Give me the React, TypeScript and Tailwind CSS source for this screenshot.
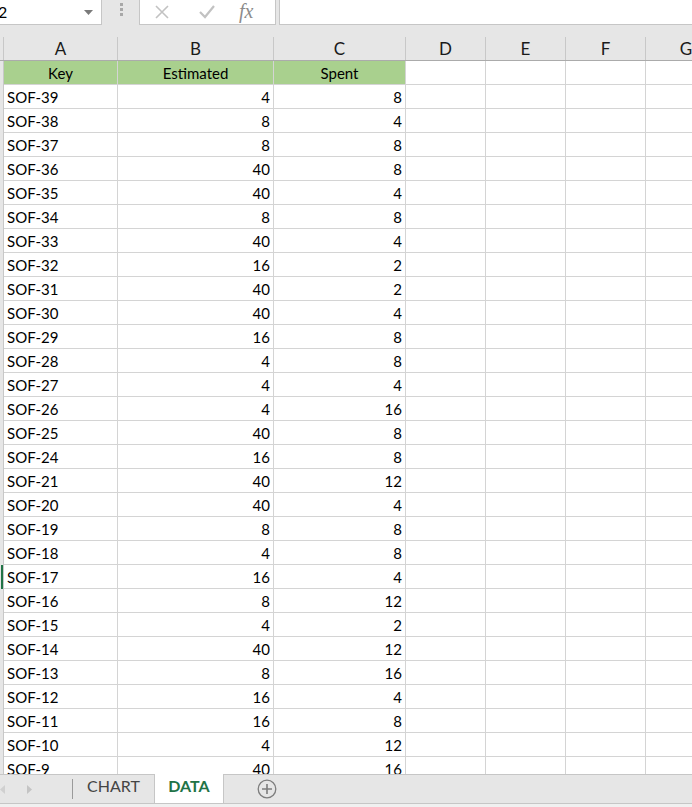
import React from 'react';

const rows: [string, number, number][] = [
  ['SOF-39', 4, 8],
  ['SOF-38', 8, 4],
  ['SOF-37', 8, 8],
  ['SOF-36', 40, 8],
  ['SOF-35', 40, 4],
  ['SOF-34', 8, 8],
  ['SOF-33', 40, 4],
  ['SOF-32', 16, 2],
  ['SOF-31', 40, 2],
  ['SOF-30', 40, 4],
  ['SOF-29', 16, 8],
  ['SOF-28', 4, 8],
  ['SOF-27', 4, 4],
  ['SOF-26', 4, 16],
  ['SOF-25', 40, 8],
  ['SOF-24', 16, 8],
  ['SOF-21', 40, 12],
  ['SOF-20', 40, 4],
  ['SOF-19', 8, 8],
  ['SOF-18', 4, 8],
  ['SOF-17', 16, 4],
  ['SOF-16', 8, 12],
  ['SOF-15', 4, 2],
  ['SOF-14', 40, 12],
  ['SOF-13', 8, 16],
  ['SOF-12', 16, 4],
  ['SOF-11', 16, 8],
  ['SOF-10', 4, 12],
  ['SOF-9', 40, 16],
];

const cols = ['w-[114px]', 'w-[156px]', 'w-[132px]', 'w-[80px]', 'w-[80px]', 'w-[80px]', 'w-[80px]'];
const letters = ['A', 'B', 'C', 'D', 'E', 'F', 'G'];

const Cell: React.FC<{ w: string; className?: string; children?: React.ReactNode }> = ({ w, className, children }) => (
  <div className={`${w} h-[24px] shrink-0 border-r border-b border-[#d4d4d4] flex items-center px-[3px] pt-[1px] ${className ?? ''}`}>{children}</div>
);

const App: React.FC = () => {
  return (
    <div className="w-[692px] h-[807px] overflow-hidden bg-[#e6e6e6] flex flex-col text-black" style={{ fontFamily: 'Lato, "Open Sans", sans-serif' }}>
      {/* formula bar */}
      <div className="h-[25px] flex shrink-0">
        <div className="w-[102px] h-[25px] bg-white border-r border-b border-[#c6c6c6] flex items-center justify-between pr-[8px]">
          <span className="text-[16px] -ml-[2px]">2</span>
          <svg width="9" height="5" viewBox="0 0 9 5"><path d="M0 0h9L4.5 5z" fill="#7a7a7a" /></svg>
        </div>
        <div className="w-[37px] flex flex-col items-center pt-[3px] gap-[2px] pl-[1px]">
          <span className="w-[3px] h-[3px] bg-[#a8a8a8]" />
          <span className="w-[3px] h-[3px] bg-[#a8a8a8]" />
          <span className="w-[3px] h-[3px] bg-[#a8a8a8]" />
        </div>
        <div className="w-[137px] h-[25px] bg-white border border-t-0 border-[#c6c6c6] flex items-center">
          <svg className="ml-[15px]" width="14" height="14" viewBox="0 0 14 14"><path d="M1 1l12 12M13 1L1 13" stroke="#c2c2c2" strokeWidth="1.6" /></svg>
          <svg className="ml-[30px]" width="16" height="14" viewBox="0 0 16 14"><path d="M1 7l5 5L15 1" stroke="#c2c2c2" strokeWidth="2.2" fill="none" /></svg>
          <span className="ml-[24px] text-[20px] italic text-[#8c8c8c] leading-none -mt-[2px]" style={{ fontFamily: '"Liberation Serif", serif' }}>fx</span>
        </div>
        <div className="flex-1 ml-[3px] h-[25px] bg-white border-l border-b border-[#c6c6c6]" />
      </div>

      {/* column headers */}
      <div className="mt-[12px] h-[24px] flex shrink-0 border-b border-[#ababab]">
        <div className="w-[4px] shrink-0 border-r border-[#c8c8c8]" />
        {cols.map((w, i) => (
          <div key={letters[i]} className={`${w} shrink-0 ${i < 6 ? 'border-r border-[#c8c8c8]' : ''} flex items-center justify-center text-[17px] text-[#1a1a1a]`}>
            {letters[i]}
          </div>
        ))}
      </div>

      {/* grid */}
      <div className="h-[713px] shrink-0 overflow-hidden bg-white flex">
        <div className="w-[4px] shrink-0 bg-[#e6e6e6] border-r border-[#c8c8c8] flex flex-col">
          <div className="h-[504px] shrink-0" />
          <div className="h-[24px] w-[2px] ml-[1px] shrink-0 bg-[#217346]" />
        </div>
        <div className="flex-1 flex flex-col text-[15px]">
          <div className="flex">
            <Cell w={cols[0]} className="bg-[#a9d08e] border-[#a9d08e] justify-center">Key</Cell>
            <Cell w={cols[1]} className="bg-[#a9d08e] border-[#a9d08e] justify-center">Estimated</Cell>
            <Cell w={cols[2]} className="bg-[#a9d08e] border-[#a9d08e] justify-center">Spent</Cell>
            {cols.slice(3).map((w, i) => <Cell key={i} w={w} />)}
          </div>
          {rows.map(([k, e, s]) => (
            <div key={k} className="flex">
              <Cell w={cols[0]}>{k}</Cell>
              <Cell w={cols[1]} className="justify-end">{e}</Cell>
              <Cell w={cols[2]} className="justify-end">{s}</Cell>
              {cols.slice(3).map((w, i) => <Cell key={i} w={w} />)}
            </div>
          ))}
        </div>
      </div>

      {/* sheet tabs */}
      <div className="h-[30px] shrink-0 border-t border-b border-[#c6c6c6] flex items-stretch">
        <div className="w-[72px] flex items-center">
          <svg width="5" height="9" viewBox="0 0 5 9"><path d="M5 0v9L0 4.5z" fill="#d0d0d0" /></svg>
          <svg className="ml-[22px]" width="5" height="9" viewBox="0 0 5 9"><path d="M0 0v9l5-4.5z" fill="#c4c4c4" /></svg>
        </div>
        <div className="w-[1px] my-[4px] bg-[#9a9a9a]" />
        <div className="w-[81px] flex items-center justify-center text-[16px] text-[#444] pb-[7px]">CHART</div>
        <div className="w-[70px] -mt-[1px] bg-white border-x border-[#c6c6c6] flex flex-col">
          <div className="flex-1 flex items-center justify-center text-[16px] font-bold text-[#217346] pb-[5px]">DATA</div>
          <div className="h-[2px] mb-[1px] bg-[#217346]" />
        </div>
        <div className="ml-[33px] flex items-center">
          <svg width="20" height="20" viewBox="0 0 20 20">
            <circle cx="10" cy="10" r="8.8" fill="none" stroke="#7d7d7d" strokeWidth="1.3" />
            <path d="M10 5v10M5 10h10" stroke="#7d7d7d" strokeWidth="1.6" />
          </svg>
        </div>
      </div>
      <div className="flex-1 bg-[#f0f0f0]" />
    </div>
  );
};

export default App;
